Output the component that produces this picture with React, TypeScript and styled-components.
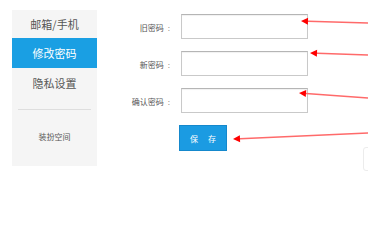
import React from 'react';
import styled, { createGlobalStyle } from 'styled-components';

const GlobalStyle = createGlobalStyle`
  html, body {
    margin: 0;
    padding: 0;
    background: #fff;
  }
  body {
    font-family: "Liberation Sans", "Noto Sans CJK SC", sans-serif;
  }
`;

const Page = styled.div`
  position: relative;
  width: 368px;
  height: 200px;
  overflow: hidden;
  display: flex;
  align-items: flex-start;
  padding: 10px 0 0 12px;
  box-sizing: border-box;
`;

const Sidebar = styled.nav`
  width: 85px;
  height: 156px;
  background: #f5f5f5;
  display: flex;
  flex-direction: column;
`;

const NavItem = styled.div<{ $active?: boolean; $first?: boolean }>`
  height: ${(p) => (p.$first ? '28px' : '30px')};
  line-height: ${(p) => (p.$first ? '28px' : '30px')};
  text-align: center;
  font-size: 11px;
  font-family: "Noto Sans CJK SC", sans-serif;
  color: ${(p) => (p.$active ? '#fff' : '#555')};
  background: ${(p) => (p.$active ? '#1a9fe3' : 'transparent')};
`;

const Divider = styled.hr`
  border: none;
  border-top: 1px solid #dedede;
  margin: 11px 6px 0 6px;
`;

const SubItem = styled.div`
  margin-top: 21px;
  text-align: center;
  font-size: 8px;
  font-family: "Noto Sans CJK SC", sans-serif;
  color: #555;
`;

const Form = styled.form`
  margin: 4px 0 0 20px;
  display: grid;
  grid-template-columns: 53px 127px;
  column-gap: 11px;
  row-gap: 12px;
  align-items: center;
`;

const Label = styled.label`
  text-align: right;
  font-size: 8px;
  font-family: "Noto Sans CJK SC", sans-serif;
  color: #555;
  white-space: nowrap;
  padding-top: 2px;
`;

const Colon = styled.span`
  margin-left: 4px;
  font-family: "Liberation Sans", sans-serif;
`;

const Input = styled.input`
  box-sizing: border-box;
  width: 127px;
  height: 25px;
  margin: 0;
  border: 1px solid #c9c9c9;
  border-top-color: #b5b5b5;
  box-shadow: inset 0 1px 1px rgba(0, 0, 0, 0.06);
  background: #fff;
  outline: none;
`;

const SaveButton = styled.button`
  grid-column: 2;
  box-sizing: border-box;
  width: 48px;
  height: 26px;
  margin: 0 0 0 -2px;
  padding: 0;
  display: flex;
  align-items: center;
  justify-content: center;
  gap: 10px;
  background: #1b9be2;
  border: 1px solid #1588cc;
  color: #fff;
  font-size: 8px;
  font-family: "Noto Sans CJK SC", sans-serif;
`;

const Arrows = styled.svg`
  position: absolute;
  left: 0;
  top: 0;
  pointer-events: none;
`;

const GhostBox = styled.div`
  position: absolute;
  left: 363px;
  top: 147px;
  width: 12px;
  height: 22px;
  border: 1px solid #ececec;
  border-radius: 3px;
`;

const arrows = [
  { x1: 301, y1: 21, x2: 368, y2: 23 },
  { x1: 310, y1: 53, x2: 368, y2: 55 },
  { x1: 299, y1: 93, x2: 368, y2: 98 },
  { x1: 233, y1: 139, x2: 368, y2: 133 },
];

const fields = ['旧密码', '新密码', '确认密码'];

const App = () => (
  <>
    <GlobalStyle />
    <Page>
      <Sidebar>
        <NavItem $first>邮箱/手机</NavItem>
        <NavItem $active>修改密码</NavItem>
        <NavItem>隐私设置</NavItem>
        <Divider />
        <SubItem>装扮空间</SubItem>
      </Sidebar>
      <Form onSubmit={(e) => e.preventDefault()}>
        {fields.map((f) => (
          <React.Fragment key={f}>
            <Label>
              {f}
              <Colon>:</Colon>
            </Label>
            <Input type="password" />
          </React.Fragment>
        ))}
        <SaveButton type="submit">
          <span>保</span>
          <span>存</span>
        </SaveButton>
      </Form>
      <GhostBox />
      <Arrows width="368" height="200" viewBox="0 0 368 200">
        {arrows.map((a, i) => {
          const dx = a.x2 - a.x1;
          const dy = a.y2 - a.y1;
          const len = Math.sqrt(dx * dx + dy * dy);
          const ux = dx / len;
          const uy = dy / len;
          const bx = a.x1 + ux * 7;
          const by = a.y1 + uy * 7;
          return (
            <g key={i}>
              <line x1={bx} y1={by} x2={a.x2} y2={a.y2} stroke="#ff6a6a" strokeWidth="1.4" />
              <polygon
                points={`${a.x1},${a.y1} ${bx - uy * 3.5},${by + ux * 3.5} ${bx + uy * 3.5},${by - ux * 3.5}`}
                fill="#f00"
              />
            </g>
          );
        })}
      </Arrows>
    </Page>
  </>
);

export default App;
